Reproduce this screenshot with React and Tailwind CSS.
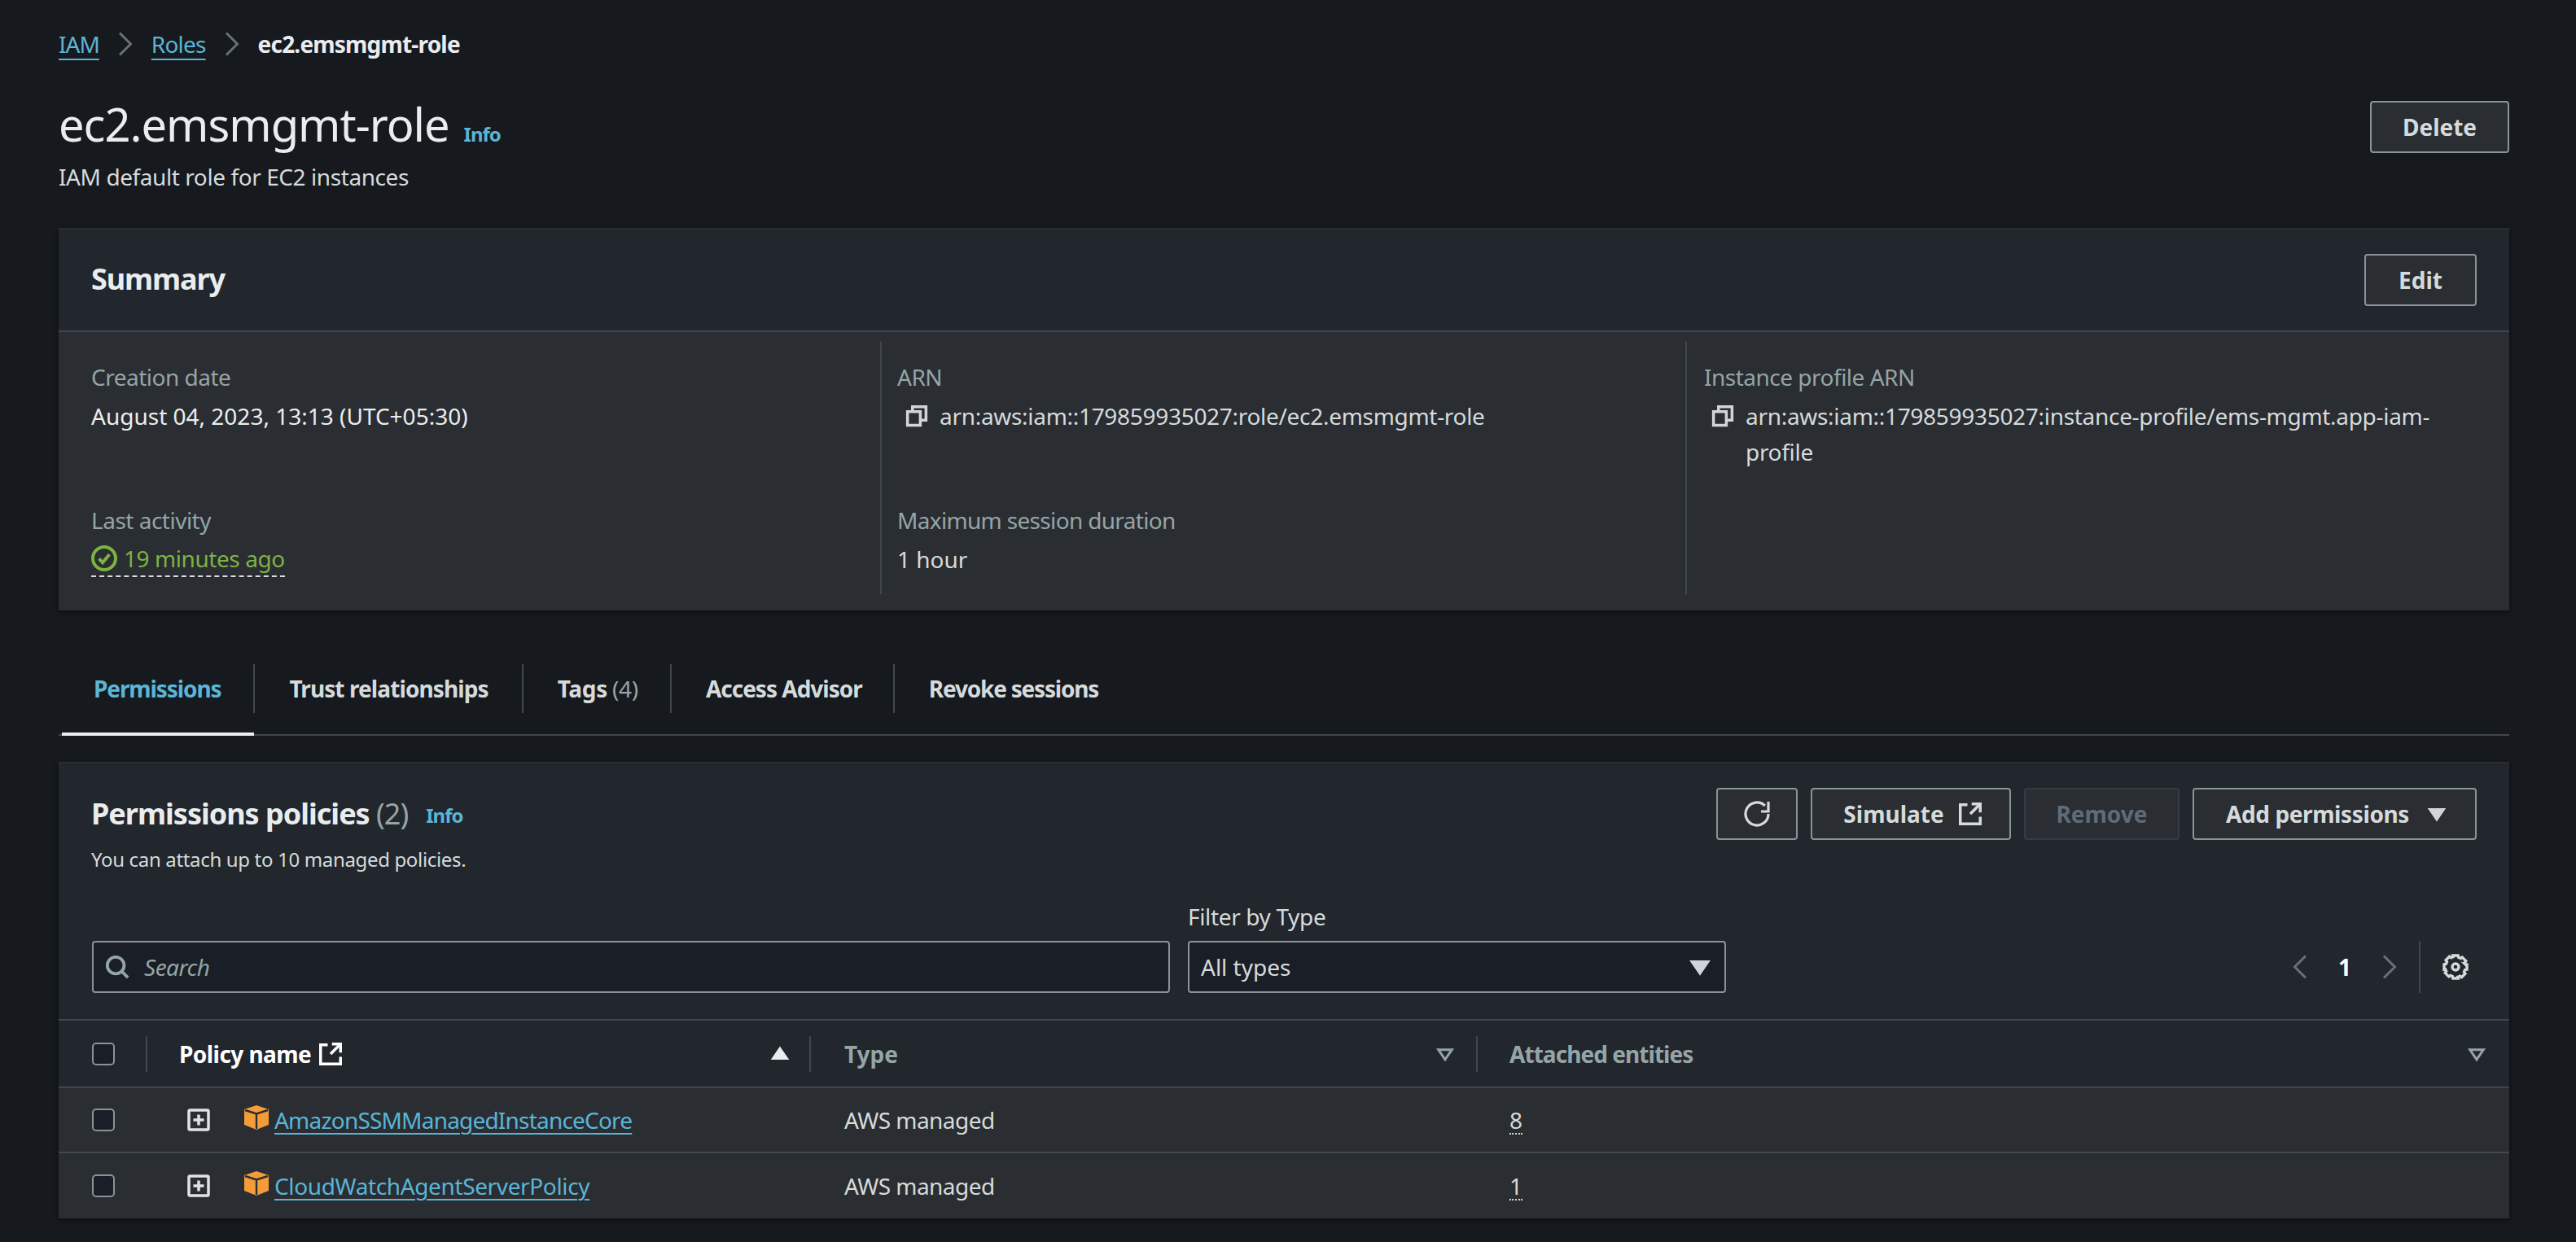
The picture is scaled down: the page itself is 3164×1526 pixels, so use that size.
import React from "react";

const font = "font-['Noto_Sans','Open_Sans',sans-serif]";

function Chevron({ className = "" }) {
  return (
    <svg width="18" height="30" viewBox="0 0 18 30" fill="none" className={className}>
      <path d="M2 1.5 15.5 15 2 28.5" stroke="#687078" strokeWidth="3" />
    </svg>
  );
}
function Caret({ size = 32, outline = false, up = false, color = "#d1d5db", className = "" }) {
  return (
    <svg width={size} height={size} viewBox="0 0 16 16" className={className}>
      <path
        d={up ? "M8 3.5 13.5 11.5h-11z" : "M2.5 4.5h11L8 12.5z"}
        fill={outline ? "none" : color}
        stroke={color}
        strokeWidth={outline ? 2 : 1}
        strokeLinejoin="miter"
      />
    </svg>
  );
}
function External({ size = 28, color = "#d5dbdb" }) {
  return (
    <svg width={size} height={size} viewBox="0 0 16 16" fill="none" stroke={color} strokeWidth="2" className="shrink-0">
      <path d="M15 7V1H9" />
      <path d="M15 1 8 8" />
      <path d="M6 1.5H1v13.5h14v-5" />
    </svg>
  );
}
function Copy() {
  return (
    <svg width="28" height="28" viewBox="0 0 16 16" fill="none" stroke="#d1d5db" strokeWidth="2" className="shrink-0">
      <path d="M1.5 5h9v9.5h-9z" />
      <path d="M5 5V1.5h9.5V11H11" />
    </svg>
  );
}
function Cube() {
  return (
    <svg width="30" height="30" viewBox="0 0 30 30" className="shrink-0">
      <path d="M15 0 30 5V24L15 30 0 24V5z" fill="#f29d38" />
      <path d="M1 6 15 10.5 29 6M15 10.5V29" fill="none" stroke="#2a2d32" strokeWidth="2.4" />
    </svg>
  );
}
function Expand() {
  return (
    <svg width="28" height="28" viewBox="0 0 28 28" fill="none" stroke="#dfe3e5" className="shrink-0">
      <rect x="2" y="2" width="24" height="24" rx="1.5" strokeWidth="3.5" />
      <path d="M14 7.5v13M7.5 14h13" strokeWidth="3.5" />
    </svg>
  );
}
function Checkbox() {
  return <span className="block w-[28px] h-[28px] shrink-0 rounded-[5px] border-2 border-[#879596] bg-[#1a1e27]" />;
}
function Btn({ children, disabled = false, className = "" }) {
  return (
    <button
      className={`h-[64px] flex items-center justify-center gap-[14px] rounded-[4px] border-2 text-[28px] font-bold ${
        disabled ? "border-[#363b44] text-[#5f6b7a] bg-[#2a2d32]" : "border-[#879596] text-[#d5dbdb] bg-[#2a2d32]"
      } ${className}`}
    >
      {children}
    </button>
  );
}
function Label({ children, className = "tracking-[-0.5px]" }) {
  return <div className={`h-[44px] leading-[44px] text-[28px] text-[#95a5a6] ${className}`}>{children}</div>;
}
function Info({ className = "" }) {
  return <span className={`text-[24px] font-bold text-[#5bb5d6] tracking-[-1px] ${className}`}>Info</span>;
}
function Tab({ children, active = false, className = "" }) {
  return (
    <div className={`h-[60px] flex items-center text-[28px] font-bold ${active ? "text-[#5bb5d6]" : "text-[#d5dbdb]"} ${className}`}>
      {children}
    </div>
  );
}
function Row({ name, count, track }) {
  return (
    <div className="grid grid-cols-[924px_819px_1fr] h-[80px] border-b-2 last:border-b-0 border-[#414750] items-center text-[28px] text-[#d5dbdb] bg-[#2a2d32]">
      <div className="flex items-center pl-[41px]">
        <Checkbox />
        <span className="ml-[89px]"><Expand /></span>
        <span className="ml-[42px] -mt-[6px]"><Cube /></span>
        <a className={`ml-[7px] text-[#5bb5d6] underline decoration-2 underline-offset-[5px] ${track}`}>{name}</a>
      </div>
      <div className="pl-[41px] tracking-[-0.55px]">AWS managed</div>
      <div className="pl-[39px]">
        <span className="border-b-2 border-dotted border-[#d5dbdb] leading-[32px] inline-block">{count}</span>
      </div>
    </div>
  );
}

export default function App() {
  return (
    <div className={`${font} min-h-[1526px] bg-[#16191e] pl-[72px] pr-[82px] pt-[34px] text-[#d5dbdb]`}>
      <nav className="flex items-center h-[40px] text-[28px]">
        <a className="text-[#5bb5d6] underline decoration-2 underline-offset-[7px] tracking-[-1px]">IAM</a>
        <Chevron className="mx-[23px]" />
        <a className="text-[#5bb5d6] underline decoration-2 underline-offset-[7px] tracking-[-0.8px]">Roles</a>
        <Chevron className="mx-[23px]" />
        <span className="font-bold text-[#e9ebed] tracking-[-0.8px]">ec2.emsmgmt-role</span>
      </nav>

      <header className="flex justify-between mt-[50px]">
        <div>
          <div className="flex items-baseline h-[60px] leading-[60px] -mt-[2px]">
            <h1 className="text-[56px] font-normal text-[#eaeded] tracking-[-1px]">ec2.emsmgmt-role</h1>
            <Info className="ml-[18px]" />
          </div>
          <p className="text-[28px] leading-[40px] mt-[15px] text-[#d5dbdb] tracking-[-0.42px]">IAM default role for EC2 instances</p>
        </div>
        <Btn className="w-[171px]">Delete</Btn>
      </header>

      <section className="mt-[43px] border-t-2 border-[#2a2d32] bg-[#22262d] shadow-[0_2px_6px_rgba(0,0,0,0.5)]">
        <div className="flex items-center justify-between h-[126px] pl-[40px] pr-[40px] border-b-2 border-[#414750]">
          <h2 className="text-[36px] font-bold text-[#eaeded] tracking-[-1.1px] -mt-[2px]">Summary</h2>
          <Btn className="w-[138px]">Edit</Btn>
        </div>
        <div className="grid grid-cols-[1009px_989px_1fr] bg-[#2a2d32] pt-[12px] pb-[20px]">
          <div className="pl-[40px] pt-[21px] h-[310px]">
            <Label>Creation date</Label>
            <div className="mt-[4px] h-[44px] leading-[44px] text-[28px] text-[#eaeded]">August 04, 2023, 13:13 (UTC+05:30)</div>
            <div className="mt-[84px]"><Label>Last activity</Label></div>
            <div className="mt-[4px] inline-flex items-center gap-[8px] h-[44px] text-[28px] text-[#7cb342] border-b-2 border-dashed border-[#d5dbdb] tracking-[-0.43px]">
              <svg width="32" height="32" viewBox="0 0 16 16" fill="none" stroke="#7cb342" strokeWidth="2">
                <circle cx="8" cy="8" r="7" />
                <path d="M4.8 8.2 7 10.6l4.2-5" />
              </svg>
              19 minutes ago
            </div>
          </div>
          <div className="border-l-2 border-[#414750] pl-[19px] pt-[21px]">
            <Label>ARN</Label>
            <div className="mt-[4px] flex items-center gap-[14px] pl-[10px] h-[44px] text-[28px] text-[#d5dbdb] tracking-[-0.3px]">
              <Copy />
              arn:aws:iam::179859935027:role/ec2.emsmgmt-role
            </div>
            <div className="mt-[84px]"><Label className="tracking-[-0.67px]">Maximum session duration</Label></div>
            <div className="mt-[4px] h-[44px] leading-[44px] text-[28px] text-[#d5dbdb]">1 hour</div>
          </div>
          <div className="border-l-2 border-[#414750] pl-[21px] pr-[60px] pt-[21px]">
            <Label>Instance profile ARN</Label>
            <div className="mt-[4px] flex items-start gap-[14px] pl-[9px] text-[28px] leading-[44px] text-[#d5dbdb] tracking-[-0.3px]">
              <span className="mt-[8px]"><Copy /></span>
              <span className="break-words min-w-0">arn:aws:iam::179859935027:instance-profile/ems-mgmt.app-iam-profile</span>
            </div>
          </div>
        </div>
      </section>

      <div className="mt-[50px] h-[104px] pt-[16px] flex items-start border-b-2 border-[#414750] relative">
        <div className="flex">
          <Tab active className="ml-[4px] pl-[39px] pr-[40px] border-r-2 border-[#414750] tracking-[-1.1px]">Permissions</Tab>
          <Tab className="pl-[42px] pr-[41px] border-r-2 border-[#414750] tracking-[-0.9px]">Trust relationships</Tab>
          <Tab className="pl-[42px] pr-[39px] border-r-2 border-[#414750] tracking-[-0.3px]">
            Tags<span className="ml-[6px] font-normal text-[#95a5a6]">(4)</span>
          </Tab>
          <Tab className="pl-[42px] pr-[38px] border-r-2 border-[#414750] tracking-[-1px]">Access Advisor</Tab>
          <Tab className="pl-[42px] tracking-[-1.2px]">Revoke sessions</Tab>
        </div>
        <span className="absolute left-[4px] -bottom-[2px] w-[236px] h-[4px] bg-[#eaeded]" />
      </div>

      <section className="mt-[32px] border-t-2 border-[#2a2d32] bg-[#22262d] shadow-[0_2px_6px_rgba(0,0,0,0.5)]">
        <div className="flex justify-between pl-[40px] pr-[40px] pt-[30px]">
          <div>
            <div className="flex items-center h-[64px]">
              <h2 className="text-[36px] font-bold text-[#eaeded] tracking-[-1px]">
                Permissions policies <span className="font-normal text-[#95a5a6]">(2)</span>
              </h2>
              <Info className="ml-[22px] mt-[4px]" />
            </div>
            <p className="mt-[4px] text-[24px] leading-[40px] text-[#d5dbdb] tracking-[-0.34px]">You can attach up to 10 managed policies.</p>
          </div>
          <div className="flex gap-[16px]">
            <Btn className="w-[100px]">
              <svg width="32" height="32" viewBox="0 0 16 16" fill="none" stroke="#d5dbdb" strokeWidth="1.6">
                <path d="M15 0.5V6.5h-4.5" />
                <path d="M15 8a7 7 0 1 1-2.1-5" />
              </svg>
            </Btn>
            <Btn className="w-[246px] pl-[4px]">Simulate <span className="ml-[4px]"><External /></span></Btn>
            <Btn disabled className="w-[191px]">Remove</Btn>
            <Btn className="w-[349px] pl-[6px] tracking-[-0.4px]">Add permissions <Caret size={28} className="ml-[6px]" /></Btn>
          </div>
        </div>

        <div className="flex items-end pl-[41px] pr-[40px] mt-[30px] pb-[32px]">
          <div className="w-[1324px] h-[64px] flex items-center gap-[18px] px-[14px] rounded-[4px] border-2 border-[#879596] bg-[#1a1e27]">
            <svg width="30" height="30" viewBox="0 0 16 16" fill="none" stroke="#95a5a6" strokeWidth="2" className="shrink-0">
              <circle cx="7" cy="7" r="5.5" />
              <path d="M11 11l4 4" />
            </svg>
            <span className="text-[28px] italic text-[#95a5a6] tracking-[-0.5px]">Search</span>
          </div>
          <div className="ml-[22px] w-[661px]">
            <div className="text-[28px] leading-[40px] mb-[10px] text-[#d5dbdb] tracking-[-0.35px]">Filter by Type</div>
            <div className="h-[64px] flex items-center justify-between pl-[14px] pr-[14px] rounded-[4px] border-2 border-[#879596] bg-[#1a1e27] text-[28px] text-[#d5dbdb]">
              All types <Caret size={32} />
            </div>
          </div>
          <div className="flex-1 h-[64px] flex items-center justify-end">
            <Chevron className="rotate-180" />
            <span className="mx-[38px] text-[28px] font-bold text-white">1</span>
            <Chevron />
            <span className="ml-[27px] h-[64px] w-[2px] bg-[#414750]" />
            <svg width="32" height="32" viewBox="0 0 16 16" fill="none" stroke="#d5dbdb" strokeWidth="1.7" className="ml-[27px] mr-[10px]">
              <path d="M13.76 6.15l1.24.25v3.2l-1.24.25a6 6 0 0 1-.5 1.2l.7 1.05-2.26 2.26-1.05-.7c-.38.21-.78.38-1.2.5L9.6 15H6.4l-.25-1.24a6 6 0 0 1-1.2-.5l-1.05.7-2.26-2.26.7-1.05a6 6 0 0 1-.5-1.2L1 9.6V6.4l1.24-.25c.12-.42.29-.82.5-1.2l-.7-1.05 2.26-2.26 1.05.7c.38-.21.78-.38 1.2-.5L6.4 1h3.2l.25 1.24c.42.12.82.29 1.2.5l1.05-.7 2.26 2.26-.7 1.05c.21.38.38.78.5 1.2z" />
              <circle cx="8" cy="8" r="2" />
            </svg>
          </div>
        </div>

        <div className="grid grid-cols-[924px_819px_1fr] h-[85px] items-center border-y-2 border-[#414750] text-[28px] font-bold">
          <div className="flex items-center h-[44px] pl-[41px] border-r-2 border-[#414750]">
            <Checkbox />
            <span className="ml-[38px] h-[44px] w-[2px] bg-[#414750]" />
            <span className="ml-[39px] text-white tracking-[-0.55px]">Policy name</span>
            <span className="ml-[10px]"><External color="#ffffff" /></span>
            <Caret size={28} up color="#eaeded" className="ml-auto mr-[22px]" />
          </div>
          <div className="flex items-center justify-between h-[44px] pl-[41px] border-r-2 border-[#414750] text-[#95a5a6]">
            Type
            <Caret size={24} outline color="#95a5a6" className="mr-[26px]" />
          </div>
          <div className="flex items-center justify-between h-[44px] pl-[39px] text-[#95a5a6]">
            <span className="tracking-[-0.95px]">Attached entities</span>
            <Caret size={24} outline color="#95a5a6" className="mr-[28px]" />
          </div>
        </div>
        <Row name="AmazonSSMManagedInstanceCore" count="8" track="tracking-[-0.8px]" />
        <Row name="CloudWatchAgentServerPolicy" count="1" track="tracking-[-0.37px]" />
      </section>
    </div>
  );
}
